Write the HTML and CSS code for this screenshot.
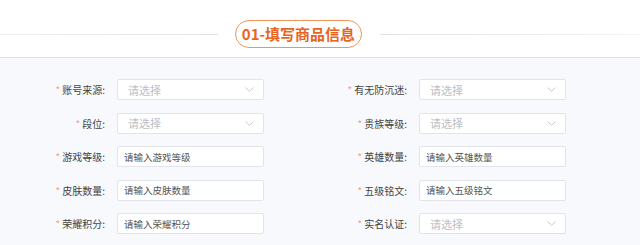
FILE: index.html
```html
<!DOCTYPE html>
<html lang="zh-CN">

<head>
    <meta charset="UTF-8">
    <meta name="viewport" content="width=device-width, initial-scale=1.0">
    <title>填写商品信息</title>
    <link rel="stylesheet" href="styles.css">
</head>

<body>
    <header class="section-head">
        <span class="head-line left"></span>
        <h2 class="section-title">01-填写商品信息</h2>
        <span class="head-line right"></span>
    </header>

    <main class="form-panel">
        <div class="form-grid">
            <div class="field">
                <label class="field-label"><i class="req">*</i>账号来源:</label>
                <div class="select-box">请选择<svg class="chevron" viewBox="0 0 9 5"><polyline points="0.5,0.5 4.5,4.3 8.5,0.5"/></svg></div>
            </div>
            <div class="field">
                <label class="field-label"><i class="req">*</i>有无防沉迷:</label>
                <div class="select-box">请选择<svg class="chevron" viewBox="0 0 9 5"><polyline points="0.5,0.5 4.5,4.3 8.5,0.5"/></svg></div>
            </div>

            <div class="field">
                <label class="field-label"><i class="req">*</i>段位:</label>
                <div class="select-box">请选择<svg class="chevron" viewBox="0 0 9 5"><polyline points="0.5,0.5 4.5,4.3 8.5,0.5"/></svg></div>
            </div>
            <div class="field">
                <label class="field-label"><i class="req">*</i>贵族等级:</label>
                <div class="select-box">请选择<svg class="chevron" viewBox="0 0 9 5"><polyline points="0.5,0.5 4.5,4.3 8.5,0.5"/></svg></div>
            </div>

            <div class="field">
                <label class="field-label"><i class="req">*</i>游戏等级:</label>
                <div class="input-box">请输入游戏等级</div>
            </div>
            <div class="field">
                <label class="field-label"><i class="req">*</i>英雄数量:</label>
                <div class="input-box">请输入英雄数量</div>
            </div>

            <div class="field">
                <label class="field-label"><i class="req">*</i>皮肤数量:</label>
                <div class="input-box">请输入皮肤数量</div>
            </div>
            <div class="field">
                <label class="field-label"><i class="req">*</i>五级铭文:</label>
                <div class="input-box">请输入五级铭文</div>
            </div>

            <div class="field">
                <label class="field-label"><i class="req">*</i>荣耀积分:</label>
                <div class="input-box">请输入荣耀积分</div>
            </div>
            <div class="field">
                <label class="field-label"><i class="req">*</i>实名认证:</label>
                <div class="select-box">请选择<svg class="chevron" viewBox="0 0 9 5"><polyline points="0.5,0.5 4.5,4.3 8.5,0.5"/></svg></div>
            </div>
        </div>
    </main>
</body>

</html>
```

FILE: styles.css
```css
* {
    margin: 0;
    padding: 0;
    box-sizing: border-box;
}

body {
    font-family: "Noto Sans CJK SC", "Noto Sans", sans-serif;
    background-color: #ffffff;
    color: #444444;
    height: 245px;
    overflow: hidden;
}

.section-head {
    height: 58px;
    padding-top: 20px;
    display: flex;
    align-items: flex-start;
    border-bottom: 1px solid #dde3ea;
}

.head-line {
    height: 1px;
    margin-top: 14px;
    background-color: #e2e5ea;
}

.head-line.left {
    width: 218px;
    margin-right: 17px;
    background: linear-gradient(to right, #eef0f3, #dfe2e7);
}

.head-line.right {
    flex: 1;
    margin-left: 18px;
    background: linear-gradient(to right, #dfe2e7, #f3f4f6);
}

.section-title {
    width: 127px;
    height: 28px;
    border: 1px solid #f0955a;
    border-radius: 14px;
    color: #e8651f;
    font-size: 15px;
    font-weight: 700;
    line-height: 26px;
    text-align: center;
    white-space: nowrap;
}

.form-panel {
    background-color: #f7f9fc;
    height: 187px;
    padding-top: 21px;
}

.form-grid {
    display: grid;
    grid-template-columns: 302px 302px;
    row-gap: 12.5px;
}

.field {
    display: flex;
    align-items: center;
    height: 21px;
}

.field-label {
    width: 117px;
    padding-right: 12px;
    text-align: right;
    font-size: 10px;
    color: #444444;
    white-space: nowrap;
}

.req {
    font-style: normal;
    color: #f4a27c;
    margin-right: 2px;
}

.select-box,
.input-box {
    width: 147px;
    height: 21px;
    background-color: #ffffff;
    border: 1px solid #e1e4ea;
    border-radius: 2px;
    display: flex;
    align-items: center;
    white-space: nowrap;
}

.select-box {
    padding: 0 9px 0 10px;
    font-size: 11px;
    color: #bcc0c6;
    justify-content: space-between;
}

.input-box {
    padding: 0 6px;
    font-size: 9.5px;
    color: #555555;
}

.chevron {
    width: 9px;
    height: 5px;
    fill: none;
    stroke: #c6cad0;
    stroke-width: 1;
}
```
